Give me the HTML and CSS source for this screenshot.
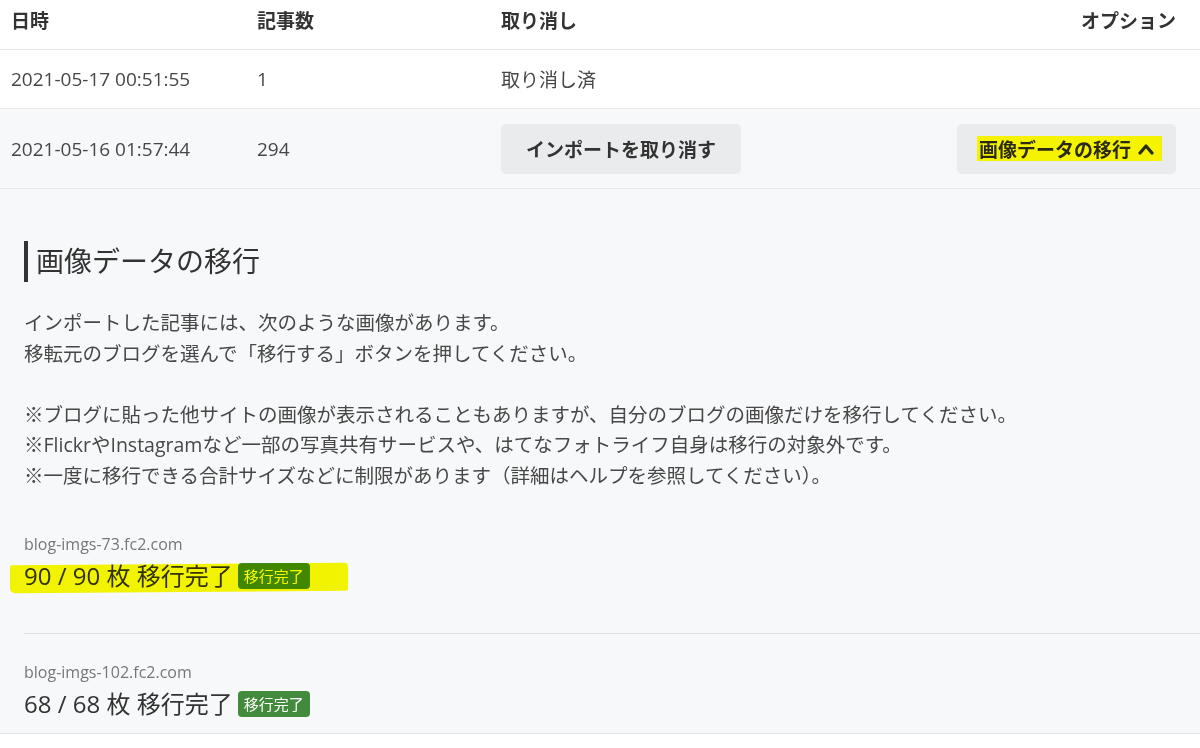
FILE: index.html
```html
<!DOCTYPE html>
<html lang="ja">
<head>
<meta charset="utf-8">
<title>インポート履歴</title>
<link rel="stylesheet" href="styles.css">
</head>
<body>
<div class="table">
  <div class="row head">
    <div>日時</div>
    <div>記事数</div>
    <div>取り消し</div>
    <div class="opt">オプション</div>
  </div>
  <div class="row r1">
    <div>2021-05-17 00:51:55</div>
    <div>1</div>
    <div>取り消し済</div>
    <div></div>
  </div>
  <div class="row r2">
    <div>2021-05-16 01:57:44</div>
    <div>294</div>
    <div><button class="btn">インポートを取り消す</button></div>
    <div class="opt"><button class="btn btn-mig"><span class="hl">画像データの移行 <svg class="chev" viewBox="0 0 16 12" width="16" height="12"><polyline points="2,10 8,3 14,10" fill="none" stroke="#2a2a10" stroke-width="3.2" stroke-linecap="round" stroke-linejoin="round"/></svg></span></button></div>
  </div>
  <div class="panel">
    <h2 class="ptitle">画像データの移行</h2>
    <p class="desc">インポートした記事には、次のような画像があります。<br>移転元のブログを選んで「移行する」ボタンを押してください。<br><br>※ブログに貼った他サイトの画像が表示されることもありますが、自分のブログの画像だけを移行してください。<br>※FlickrやInstagramなど一部の写真共有サービスや、はてなフォトライフ自身は移行の対象外です。<br>※一度に移行できる合計サイズなどに制限があります（詳細はヘルプを参照してください）。</p>
    <div class="items">
      <div class="item first">
        <div class="host">blog-imgs-73.fc2.com</div>
        <div class="count">90 / 90 枚 移行完了 <span class="badge">移行完了</span></div>
        <div class="marker"></div>
      </div>
      <div class="item">
        <div class="host">blog-imgs-102.fc2.com</div>
        <div class="count">68 / 68 枚 移行完了 <span class="badge">移行完了</span></div>
      </div>
    </div>
  </div>
</div>
</body>
</html>
```
FILE: styles.css
```css
* { box-sizing: border-box; }
html, body {
  margin: 0;
  padding: 0;
  background: #fff;
}
body {
  font-family: "Open Sans", "Noto Sans CJK JP", sans-serif;
  color: #474747;
  font-size: 19px;
}
.row {
  display: grid;
  grid-template-columns: 246px 244px 1fr auto;
  align-items: center;
  padding: 0 24px 0 11px;
  border-bottom: 1px solid #e6e8ea;
}
.head {
  height: 50px;
  font-weight: bold;
  color: #333;
  padding-bottom: 9px;
}
.opt { text-align: right; }
.r1 { height: 59px; }
.r2 { height: 80px; background: #f7f8f9; }
.btn {
  font-family: inherit;
  font-size: 19px;
  font-weight: bold;
  color: #333;
  background: #e9ebec;
  border: none;
  border-radius: 5px;
  height: 50px;
  padding: 0 25px;
  display: inline-flex;
  align-items: center;
}
.btn-mig { padding: 0 14px 0 20px; }
.hl {
  background: #f6f300;
  color: #2a2a14;
  padding: 0 8px 0 2px;
  display: inline-flex;
  align-items: center;
  gap: 7px;
  height: 25px;
}
.chev { display: block; }
.panel {
  background: #f7f8f9;
  padding: 52px 0 0 24px;
  border-bottom: 1px solid #dfe1e3;
}
.ptitle {
  margin: 0;
  font-weight: normal;
  font-size: 28px;
  color: #333;
  border-left: 4px solid #333;
  padding-left: 8px;
  line-height: 41px;
}
.desc {
  margin: 26px 0 0;
  font-size: 19.5px;
  line-height: 30.6px;
  color: #474747;
}
.items { margin-top: 14px; }
.item {
  position: relative;
  padding: 28px 0 7px;
}
.item.first { padding-bottom: 35px; }
.item + .item { border-top: 1px solid #dfe1e3; }
.host {
  font-size: 16px;
  color: #777;
  line-height: 20px;
}
.count {
  font-size: 24px;
  color: #333;
  line-height: 44px;
  display: flex;
  align-items: center;
  gap: 5px;
}
.badge {
  font-size: 15px;
  background: #428a3c;
  color: #fff;
  border-radius: 4px;
  padding: 0 6px;
  line-height: 26px;
  height: 26px;
}
.marker {
  position: absolute;
  left: -14px;
  top: 58px;
  width: 338px;
  height: 28px;
  background: #fafa00;
  mix-blend-mode: multiply;
  border-radius: 2px 4px 2px 5px;
  transform: skewY(-0.4deg);
}
```
